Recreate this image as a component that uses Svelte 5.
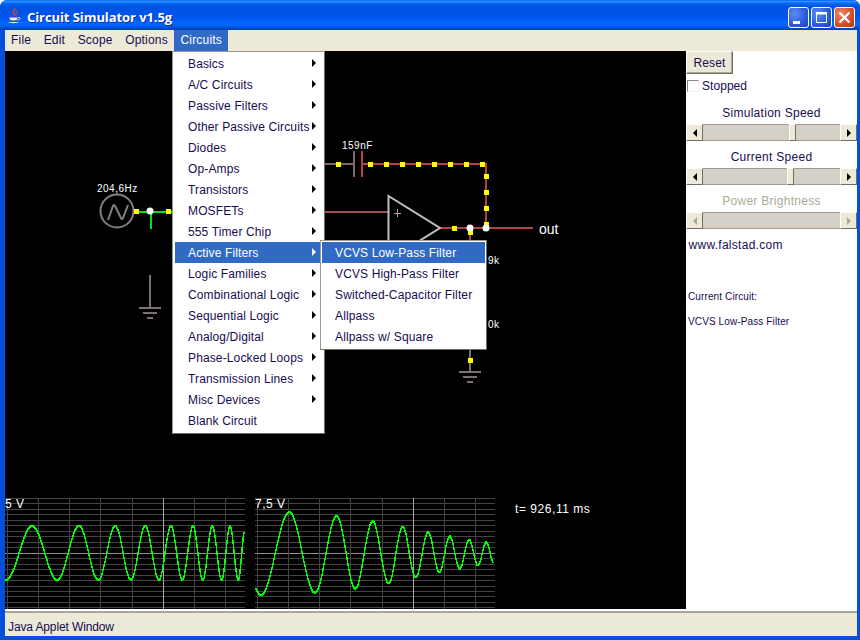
<script>
  const menuItems = [
    ['Basics', 1], ['A/C Circuits', 1], ['Passive Filters', 1], ['Other Passive Circuits', 1],
    ['Diodes', 1], ['Op-Amps', 1], ['Transistors', 1], ['MOSFETs', 1], ['555 Timer Chip', 1],
    ['Active Filters', 1], ['Logic Families', 1], ['Combinational Logic', 1], ['Sequential Logic', 1],
    ['Analog/Digital', 1], ['Phase-Locked Loops', 1], ['Transmission Lines', 1], ['Misc Devices', 1], ['Blank Circuit', 0]
  ];
  const subItems = ['VCVS Low-Pass Filter', 'VCVS High-Pass Filter', 'Switched-Capacitor Filter', 'Allpass', 'Allpass w/ Square'];
  const topMenus = ['File', 'Edit', 'Scope', 'Options', 'Circuits'];

  const w1 = [[5,580],[6,580],[32.3,526],[57.3,580],[79,526],[98.3,580],[115.3,526],[131,580],[145.3,526],[159,580],[171,526],[182.3,580],[193,526],[202.7,580],[212.3,526],[221.7,580],[230,526],[238.3,580],[245,529]];
  const w2 = [[255,589],[261,595.3],[289.3,512.3],[315,592.7],[336.7,516],[355.3,588.7],[372.7,521.3],[388.7,583.3],[402.7,526.7],[415.7,577.3],[428.3,532.3],[439.3,572.3],[449.7,536.3],[459.7,568.7],[469,539.7],[478,565.3],[486.3,542.3],[494,563.5]];

  function wave(pts) {
    const out = [];
    for (let i = 0; i < pts.length - 1; i++) {
      const [x0, y0] = pts[i], [x1, y1] = pts[i + 1];
      for (let x = Math.ceil(x0); x < x1; x++) {
        const t = (x - x0) / (x1 - x0);
        const y = y0 + (y1 - y0) * (1 - Math.cos(Math.PI * t)) / 2;
        out.push(x + ',' + Math.round(y));
      }
    }
    return out.join(' ');
  }
  const wave1 = wave(w1);
  const wave2 = wave(w2);
  const hLines = Array.from({ length: 21 }, (_, i) => 498.5 + Math.round(i * 5.47));
  const scopes = [
    { x0: 5, x1: 245, v: [7, 38, 69, 100, 132, 163, 194, 225], bright: 163, label: '5 V', path: wave1 },
    { x0: 255, x1: 495, v: [257, 288, 319, 350, 382, 413, 444, 475], bright: 413, label: '7,5 V', path: wave2 }
  ];
  const dots = [[136, 211], [168, 211], [338, 164], [370, 164], [386, 164], [402, 164], [418, 164], [434, 164], [450, 164], [466, 164], [482, 164], [486, 176], [486, 192], [486, 208], [486, 224], [454, 228], [470, 232], [470, 360]];
  const sliders = [
    { label: 'Simulation Speed', left: 86 },
    { label: 'Current Speed', left: 84 },
    { label: 'Power Brightness', off: true }
  ];
</script>

<div class="win">
  <header class="title">
    <svg class="java" width="17" height="18" viewBox="0 0 17 18">
      <path d="M9 1c1 2-3 3-2 5s2 1 1 3M11 4c0 2-2 2-1 4" fill="none" stroke="#d8402a" stroke-width="1.4"/>
      <path d="M3 10h9v1c0 2-2 3-4.500 3S3 13 3 11z" fill="#e8eefa" stroke="#3a4f8c"/>
      <path d="M12 10.500c3-.5 3 2-.5 2.500" fill="none" stroke="#dfe6f5"/>
      <path d="M2 15h11c-1 1.500-9 1.500-11 0z" fill="#dfe6f5"/>
    </svg>
    <span class="title-text">Circuit Simulator v1.5g</span>
    <div class="wbtns">
      <span class="wbtn"><svg width="19" height="19" viewBox="0 0 19 19"><rect x="4" y="13" width="7" height="3" fill="#fff"/></svg></span>
      <span class="wbtn"><svg width="19" height="19" viewBox="0 0 19 19"><path d="M4.500 4.500h10v10h-10z" fill="none" stroke="#fff"/><rect x="4" y="4" width="11" height="2.500" fill="#fff"/></svg></span>
      <span class="wbtn close"><svg width="19" height="19" viewBox="0 0 19 19"><path d="M4.500 4.500l10 10M14.500 4.500l-10 10" stroke="#fff" stroke-width="2.200"/></svg></span>
    </div>
  </header>

  <div class="inner">
    <nav class="menubar">
      {#each topMenus as m}
        <span class="top" class:on={m === 'Circuits'}>{m}</span>
      {/each}
    </nav>

    <div class="main">
      <div class="canvas">
        <svg class="draw" width="681" height="558" viewBox="5 51 681 558">
          <circle cx="117" cy="211" r="16.500" fill="none" stroke="#808080" stroke-width="2"/>
          <path d="M108 220l5-14q1-2 2 0l6 12q1 2 2 0l5-13" fill="none" stroke="#808080" stroke-width="2"/>
          <text class="lbl" x="97" y="192">204,6Hz</text>
          <g shape-rendering="crispEdges" fill="none">
            <path d="M134 211.500h44M150.500 211v18" stroke="#00e020" stroke-width="2"/>
            <path d="M150 275v33" stroke="#7f7070" stroke-width="2"/>
            <path d="M139 308h22M143 313h14M147 318h6" stroke="#7f7070" stroke-width="2"/>
            <path d="M325 164h29M354 151v26" stroke="#806868" stroke-width="2"/>
            <path d="M362 151v26M362 164h124v64M440 228h93M470 228v14" stroke="#b84040" stroke-width="2"/>
            <path d="M325 212h63" stroke="#a05050" stroke-width="2"/>
            <path d="M470 349v22" stroke="#7f7070" stroke-width="2"/>
            <path d="M459 371.500h22M463 376.500h14M467 381.500h6" stroke="#7f7070" stroke-width="2"/>
            <path d="M394 213h7M397.500 209v8" stroke="#a8a8a8" stroke-width="1"/>
          </g>
          <path d="M388.500 196v64L440 228z" fill="none" stroke="#c0c0c0" stroke-width="2"/>
          {#each dots as d}
            <rect x={d[0] - 2} y={d[1] - 2} width="5" height="5" fill="#ffff00"/>
          {/each}
          <circle cx="150" cy="211" r="3.500" fill="#fff"/>
          <circle cx="470" cy="228" r="3.500" fill="#fff"/>
          <circle cx="486" cy="228" r="3.500" fill="#fff"/>
          <text class="lbl" x="342" y="149">159nF</text>
          <text class="out" x="539" y="234">out</text>
          <text class="lbl" x="488" y="264">9k</text>
          <text class="lbl" x="488" y="328">0k</text>

          {#each scopes as s}
            <g shape-rendering="crispEdges">
              {#each hLines as y, i}
                <line x1={s.x0} x2={s.x1} y1={y} y2={y} stroke={i === 10 ? '#909090' : '#444'}/>
              {/each}
              {#each s.v as x}
                <line x1={x + .5} x2={x + .5} y1="498" y2="609" stroke={x === s.bright ? '#a8a8a8' : '#444'}/>
              {/each}
              <polyline points={s.path} fill="none" stroke="#00ff00" stroke-width="1.500"/>
            </g>
            <text class="scopel" x={s.x0} y="508">{s.label}</text>
          {/each}
          <text class="time" x="515" y="513">t= 926,11 ms</text>
        </svg>
      </div>

      <aside class="side">
        <button class="reset">Reset</button>
        <label class="check"><span class="box"></span>Stopped</label>
        {#each sliders as s}
          <div class="slabel" class:off={s.off}>{s.label}</div>
          <div class="sbar" class:off={s.off}>
            <span class="arrow"><i class="tri l"></i></span>
            <span class="track">
              {#if !s.off}<span class="thumb" style="left:{s.left}px"></span>{/if}
            </span>
            <span class="arrow"><i class="tri r"></i></span>
          </div>
        {/each}
        <div class="site">www.falstad.com</div>
        <div class="small cur">Current Circuit:</div>
        <div class="small nm">VCVS Low-Pass Filter</div>
      </aside>

      <ul class="menu">
        {#each menuItems as [t, a]}
          <li class:on={t === 'Active Filters'}>
            <span>{t}</span>
            {#if a}<i class="mtri"></i>{/if}
          </li>
        {/each}
      </ul>
      <ul class="menu sub">
        {#each subItems as t, i}
          <li class:on={i === 0}><span>{t}</span></li>
        {/each}
      </ul>
    </div>

    <footer class="status">Java Applet Window</footer>
  </div>
</div>

<style>
  :global(body) { margin: 0; background: #fff; }
  * { box-sizing: border-box; }
  .win {
    width: 860px; height: 640px; display: flex; flex-direction: column;
    background: #0450dc; border-radius: 7px 7px 0 0; overflow: hidden;
    font-family: "Liberation Sans", Arial, sans-serif; font-size: 12px; color: #180c50;
  }
  .title {
    height: 30px; flex: none; display: flex; align-items: center; padding: 0 5px 0 6px;
    background: linear-gradient(to bottom, #0058ee 0, #3593ff 4%, #288eff 6%, #127dff 8%, #036ffc 10%, #0262ee 14%, #0057e5 20%, #0054e3 24%, #0055eb 56%, #005bf5 66%, #026afe 76%, #0062ef 86%, #0052d6 92%, #0040ab 100%);
  }
  .java { flex: none; margin-top: 2px; }
  .title-text {
    margin-left: 4px; color: #fff; font: bold 13px "Open Sans", "Noto Sans", sans-serif;
    text-shadow: 1px 1px 0 #0a2f9c; white-space: nowrap; letter-spacing: -.08px; margin-top: 3px;
  }
  .wbtns { margin-left: auto; display: flex; gap: 2px; margin-top: 5px; }
  .wbtn {
    width: 21px; height: 21px; border: 1px solid #fff; border-radius: 3px; display: flex; align-items: center; justify-content: center;
    background: radial-gradient(circle at 30% 30%, #5f8bf0 0, #2c5fe0 55%, #1a3fc0 100%);
  }
  .wbtn.close { background: radial-gradient(circle at 30% 30%, #e8886a 0, #d9502c 55%, #b8300e 100%); }

  .inner { flex: 1; min-height: 0; display: flex; flex-direction: column; margin: 0 3px 4px 5px; }
  .menubar { height: 21px; flex: none; background: #ece9d8; display: flex; }
  .top { padding: 0 6px; line-height: 21px; letter-spacing: .2px; }
  .top:nth-child(n+2) { margin-left: .5px; }
  .top.on { background: #316ac5; color: #fff; }

  .main { position: relative; flex: none; height: 558px; display: flex; }
  .canvas { width: 681px; flex: none; background: #000; }
  .draw { display: block; }
  .lbl { font: 10px "Liberation Sans", sans-serif; fill: #fff; letter-spacing: .5px; }
  .out { font: 14px "Liberation Sans", sans-serif; fill: #fff; }
  .scopel { font: 12px "Liberation Sans", sans-serif; fill: #fff; letter-spacing: .5px; }
  .time { font: 12px "Liberation Sans", sans-serif; fill: #fff; letter-spacing: .55px; }

  .side { flex: 1; background: #fff; display: flex; flex-direction: column; letter-spacing: .28px; }
  .reset {
    width: 47px; height: 23px; padding: 0; background: #ece9d8; font: 12px "Liberation Sans", sans-serif; color: #180c50;
    border: 1px solid; border-color: #fff #716f64 #716f64 #fff; box-shadow: inset -1px -1px 0 #aca899; letter-spacing: .1px;
  }
  .check { display: flex; align-items: center; height: 14px; margin: 5px 0 0 1px; letter-spacing: .05px; }
  .box { width: 12px; height: 12px; border: 1px solid; border-color: #8a887c #f4f2ea #f4f2ea #8a887c; margin-right: 3px; background: #fff; }
  .slabel { text-align: center; height: 14px; line-height: 14px; margin-top: 13px; }
  .slabel.off { color: #aca899; margin-top: 14px; }
  .sbar { height: 17px; margin-top: 4px; display: flex; background: #d4d0c8; border-bottom: 1px solid #a09c90; border-top: 1px solid #a09c90; }
  .sbar + .slabel { margin-top: 9px; }
  .arrow { width: 17px; flex: none; background: #ece9d8; border: 1px solid; border-color: #fff #716f64 #716f64 #fff; display: flex; align-items: center; justify-content: center; margin: -1px 0; height: 17px; }
  .track { flex: 1; position: relative; }
  .thumb { position: absolute; top: -1px; width: 7px; height: 17px; background: #ece9d8; border: 1px solid; border-color: #fff #716f64 #716f64 #fff; }
  .tri { width: 0; height: 0; border-top: 4px solid transparent; border-bottom: 4px solid transparent; }
  .tri.l { border-right: 4px solid #000; }
  .tri.r { border-left: 4px solid #000; }
  .sbar.off .tri.l { border-right-color: #aca899; }
  .sbar.off .tri.r { border-left-color: #aca899; }
  .site { margin: 9px 0 0 2.5px; line-height: 14px; }
  .small { font-size: 10px; margin-left: 2px; line-height: 12px; letter-spacing: .12px; }
  .cur { margin-top: 39px; }
  .nm { margin-top: 13px; }

  .menu {
    position: absolute; left: 167px; top: 0; width: 153px; height: 383px; margin: 0; padding: 1px 2px; list-style: none;
    background: #fff; border: 1px solid #9c9a8c; border-right-color: #716f64; border-bottom-color: #716f64;
  }
  .menu li { height: 21px; display: flex; align-items: center; padding-left: 13px; position: relative; white-space: nowrap; letter-spacing: .13px; }
  .menu li.on { background: #316ac5; color: #fff; }
  .mtri { position: absolute; left: 137px; top: 6px; border-left: 4px solid #000; border-top: 4px solid transparent; border-bottom: 4px solid transparent; }
  .menu li.on .mtri { border-left-color: #fff; }
  .sub { left: 315px; top: 189px; width: 167px; height: 110px; padding: 1px; }
  .status {
    flex: 1; min-height: 0; background: #ece9d8; border-top: 2px solid #fff; box-shadow: inset 0 2px 0 #a8a498;
    padding: 10px 0 0 3px; line-height: 13px; font-size: 12px; letter-spacing: -.12px;
  }
</style>
